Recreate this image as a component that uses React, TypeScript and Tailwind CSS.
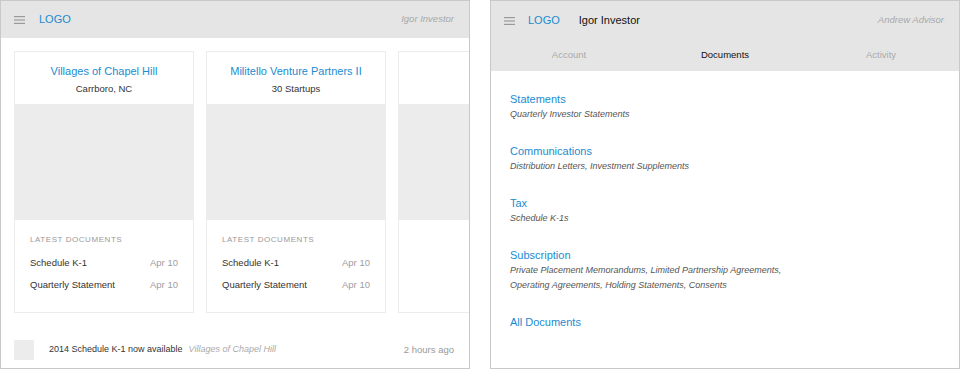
import React from "react";

const font = { fontFamily: '"Liberation Sans", Arial, Helvetica, sans-serif' };

function Burger() {
  return (
    <svg width="11" height="8" viewBox="0 0 11 8" className="shrink-0">
      <rect x="0" y="0" width="11" height="1.2" fill="#9a9a9a" />
      <rect x="0" y="3.4" width="11" height="1.2" fill="#9a9a9a" />
      <rect x="0" y="6.8" width="11" height="1.2" fill="#9a9a9a" />
    </svg>
  );
}

type Fund = { name: string; sub: string };

const funds: Fund[] = [
  { name: "Villages of Chapel Hill", sub: "Carrboro, NC" },
  { name: "Militello Venture Partners II", sub: "30 Startups" },
  { name: "", sub: "" },
];

function FundCard({ fund }: { fund: Fund }) {
  return (
    <div className="w-[180px] shrink-0 border border-[#ececec] bg-white flex flex-col">
      <div className="h-[52px] flex flex-col items-center pt-[12px]">
        <div className="text-[11px] leading-[14px] text-[#1b8bd0]">{fund.name}</div>
        <div className="text-[9.5px] leading-[12px] mt-[5px] text-[#333]">{fund.sub}</div>
      </div>
      <div className="h-[116px] bg-[#ececec]" />
      <div className="h-[92px] px-[15px] pt-[14px]">
        {fund.name && (
          <>
            <div className="text-[8px] tracking-[0.07em] text-[#999] leading-[10px] mt-[1px]">LATEST DOCUMENTS</div>
            <div className="flex justify-between text-[9.5px] leading-[12px] mt-[12px]">
              <span className="text-[#333]">Schedule K-1</span>
              <span className="text-[#a0a0a0]">Apr 10</span>
            </div>
            <div className="flex justify-between text-[9.5px] leading-[12px] mt-[10px]">
              <span className="text-[#333]">Quarterly Statement</span>
              <span className="text-[#a0a0a0]">Apr 10</span>
            </div>
          </>
        )}
      </div>
    </div>
  );
}

function InvestorView() {
  return (
    <div className="w-[470px] h-[369px] border border-[#c9c9c9] bg-white flex flex-col overflow-hidden">
      <div className="h-[37px] bg-[#e5e5e5] flex items-center px-[13px] shrink-0">
        <Burger />
        <span className="ml-[14px] text-[11px] text-[#1b8bd0]">LOGO</span>
        <span className="ml-auto italic text-[9.5px] text-[#a8a8a8] pr-[2px]">Igor Investor</span>
      </div>
      <div className="flex gap-[12px] pl-[13px] pt-[13px] overflow-hidden">
        {funds.map((f, i) => (
          <FundCard key={i} fund={f} />
        ))}
      </div>
      <div className="flex items-center pl-[13px] pr-[15px] mt-[27px]">
        <div className="w-[20px] h-[20px] bg-[#ececec] shrink-0" />
        <span className="ml-[15px] text-[9px] text-[#333]">2014 Schedule K-1 now available</span>
        <span className="ml-[6px] italic text-[9px] text-[#aaa]">Villages of Chapel Hill</span>
        <span className="ml-auto text-[9.5px] text-[#999]">2 hours ago</span>
      </div>
    </div>
  );
}

const sections = [
  { title: "Statements", lines: ["Quarterly Investor Statements"] },
  { title: "Communications", lines: ["Distribution Letters, Investment Supplements"] },
  { title: "Tax", lines: ["Schedule K-1s"] },
  {
    title: "Subscription",
    lines: [
      "Private Placement Memorandums, Limited Partnership Agreements,",
      "Operating Agreements, Holding Statements, Consents",
    ],
  },
];

function AdvisorView() {
  return (
    <div className="w-[470px] h-[369px] border border-[#c9c9c9] bg-white flex flex-col overflow-hidden">
      <div className="h-[70px] bg-[#e5e5e5] shrink-0 flex flex-col">
        <div className="h-[39px] flex items-center px-[13px]">
          <Burger />
          <span className="ml-[13px] text-[11px] text-[#1b8bd0]">LOGO</span>
          <span className="ml-[19px] text-[11px] text-[#111]">Igor Investor</span>
          <span className="ml-auto italic text-[9.5px] text-[#a8a8a8] pr-[2px]">Andrew Advisor</span>
        </div>
        <div className="grid grid-cols-3 text-[9.5px] leading-[12px] text-center pt-[9px]">
          <span className="text-[#aaa]">Account</span>
          <span className="text-[#111]">Documents</span>
          <span className="text-[#aaa]">Activity</span>
        </div>
      </div>
      <div className="px-[19px] pt-[21px] flex flex-col">
        {sections.map((s) => (
          <div key={s.title} className="mb-[23px]">
            <div className="text-[11px] leading-[14px] text-[#1b8bd0]">{s.title}</div>
            {s.lines.map((l) => (
              <div key={l} className="italic text-[9px] leading-[14px] mt-[1px] text-[#555]">
                {l}
              </div>
            ))}
          </div>
        ))}
        <div className="text-[11px] leading-[14px] text-[#1b8bd0]">All Documents</div>
      </div>
    </div>
  );
}

export default function App() {
  return (
    <div className="w-[960px] h-[369px] flex gap-[20px] bg-white" style={font}>
      <InvestorView />
      <AdvisorView />
    </div>
  );
}
